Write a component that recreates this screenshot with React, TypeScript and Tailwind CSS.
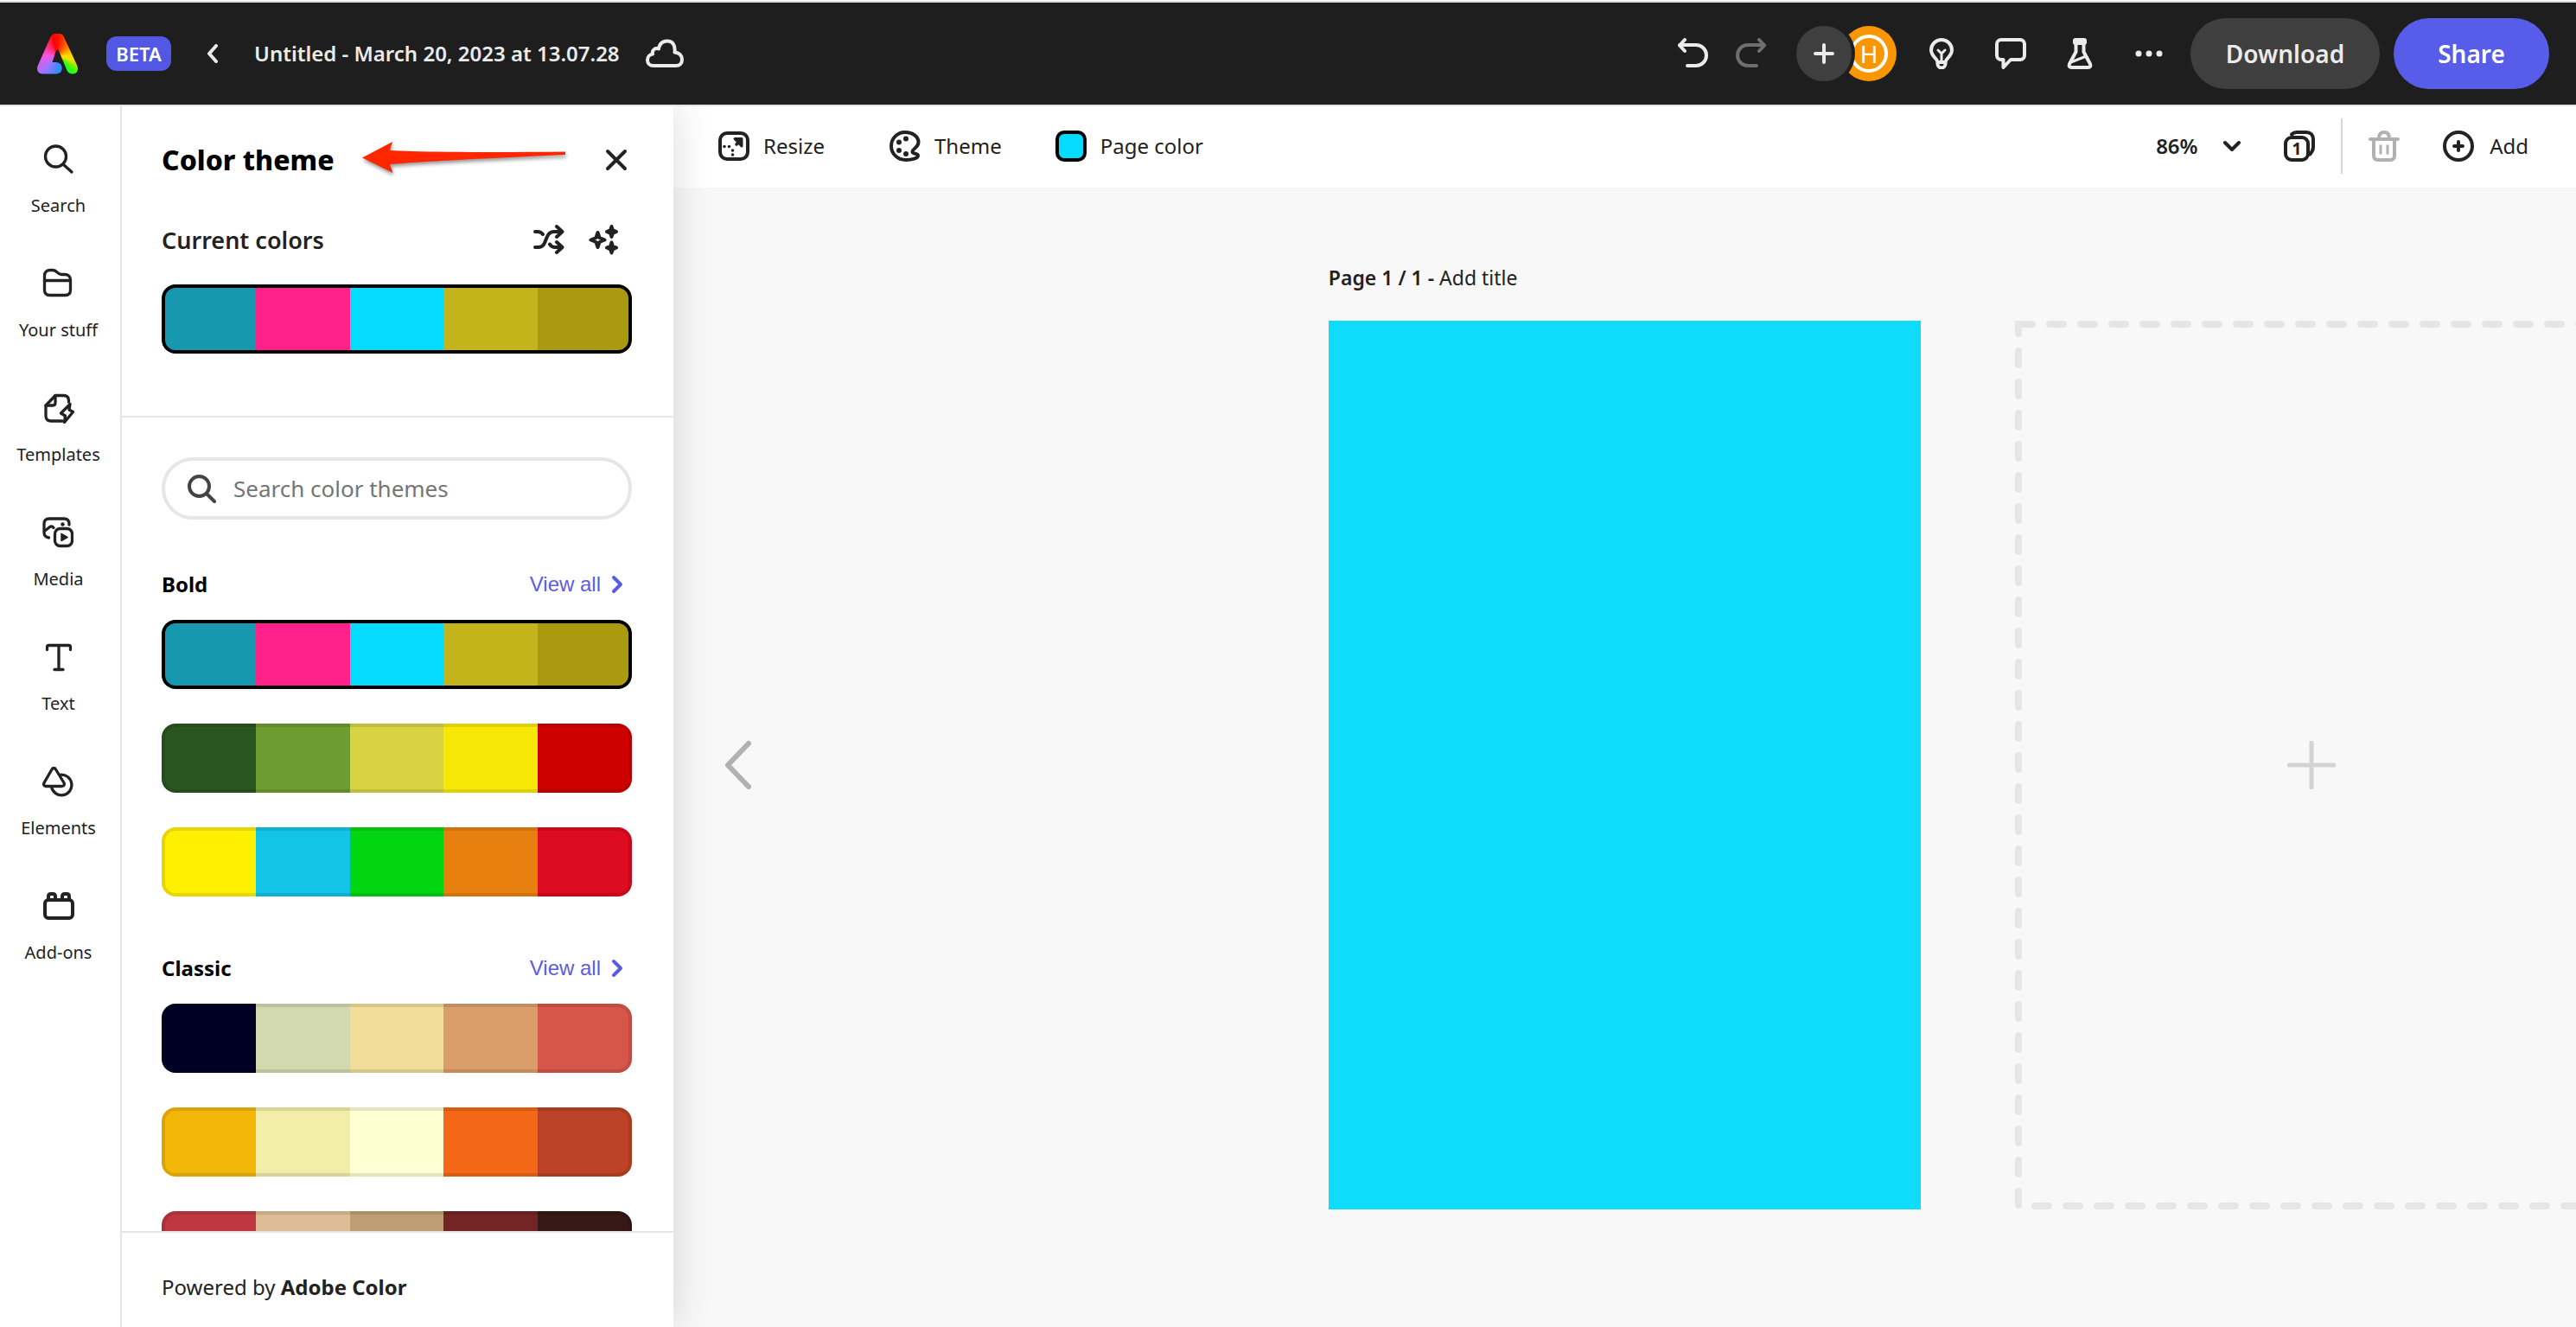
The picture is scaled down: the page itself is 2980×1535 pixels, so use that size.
import type { ReactNode } from "react";

type IconProps = { children: ReactNode; w?: number; h?: number; sw?: number; className?: string };

function Icon({ children, w = 36, h = 36, sw = 4, className = "" }: IconProps) {
  return (
    <svg
      width={w}
      height={h}
      viewBox={`0 0 ${w} ${h}`}
      fill="none"
      stroke="currentColor"
      strokeWidth={sw}
      strokeLinecap="round"
      strokeLinejoin="round"
      aria-hidden="true"
      className={`shrink-0 ${className}`}
    >
      {children}
    </svg>
  );
}

const navItems: { label: string; icon: ReactNode }[] = [
  {
    label: "Search",
    icon: (
      <Icon sw={3.3}>
        <circle cx="14.5" cy="15" r="12" />
        <path d="M23 24 L33 33" />
      </Icon>
    ),
  },
  {
    label: "Your stuff",
    icon: (
      <Icon sw={3.3}>
        <path d="M2.5 9 C2.5 5 5 2.5 9 2.5 H12.5 C17 2.5 17 7.5 22 7.5 H26 C30 7.5 32.5 10 32.5 13.5 V25.5 C32.5 29.5 30 31.5 26.5 31.5 H8.5 C4.5 31.5 2.5 29 2.5 25.5 Z M2.5 14.5 H32.5" />
      </Icon>
    ),
  },
  {
    label: "Templates",
    icon: (
      <Icon sw={3.3}>
        <path d="M22 33 H9 C5 33 3 31 3 27 V15 L14 3.5 H23.5 C27.5 3.5 29.5 5.5 29.5 9.5 V11" />
        <path d="M3 15 H11 C13 15 14 14 14 12 V3.5" />
        <path d="M31 13.5 L20.5 24 L25.5 27 L24.5 34.5 L34.5 22.5 L30 20 Z" />
      </Icon>
    ),
  },
  {
    label: "Media",
    icon: (
      <Icon sw={3.3}>
        <path d="M31 9 V8 C31 4 29 2 25 2 H8 C4 2 2 4 2 8 V18 C2 21.5 4 23.5 7.5 24" />
        <path d="M3 16 L8 12 C10 10.5 11.5 10.5 13 12.5" />
        <circle cx="23.5" cy="8.5" r="2.2" fill="currentColor" stroke="none" />
        <rect x="14.5" y="13.5" width="20" height="20" rx="6" />
        <path d="M22 19.5 L29 23.5 L22 27.5 Z" fill="currentColor" strokeWidth="1.5" />
      </Icon>
    ),
  },
  {
    label: "Text",
    icon: (
      <Icon sw={3.3}>
        <path d="M4.5 9.5 V7 C4.5 5.5 5 4.5 6.5 4.5 H29.5 C31 4.5 31.5 5.5 31.5 7 V9.5" />
        <path d="M18 5 V32.5 M13 32.5 H23" />
      </Icon>
    ),
  },
  {
    label: "Elements",
    icon: (
      <Icon sw={3.3}>
        <path d="M11 4 C12 2 14.5 2 15.5 4 L25 19.5 C26 21.5 25 23.5 22.5 23.5 H4 C2 23.5 1 21.5 2 19.5 Z" />
        <path d="M20.5 10.3 A11.8 11.8 0 1 1 10.5 24" />
      </Icon>
    ),
  },
  {
    label: "Add-ons",
    icon: (
      <Icon sw={4}>
        <rect x="2" y="11" width="32" height="21" rx="4" />
        <path d="M6 11 V7 C6 5 7 4 9 4 H11 C13 4 14 5 14 7 V11 M22 11 V7 C22 5 23 4 25 4 H27 C29 4 30 5 30 7 V11" />
      </Icon>
    ),
  },
];

const currentTheme = ["#1898af", "#ff2189", "#05daff", "#c4b41b", "#aa9a0f"];

const sections = [
  {
    name: "Bold",
    themes: [
      currentTheme,
      ["#29561f", "#6f9c30", "#d7d343", "#f8e805", "#cf0000"],
      ["#ffef00", "#13c4e7", "#02d611", "#e8800f", "#dd0c20"],
    ],
  },
  {
    name: "Classic",
    themes: [
      ["#000024", "#d2d9ae", "#f1dc9a", "#d99e6a", "#d7564a"],
      ["#f2b708", "#f2eda8", "#feffd3", "#f36716", "#bc4328"],
      ["#be3640", "#debd96", "#bf9e76", "#732425", "#361817"],
    ],
  },
];

function Swatches({ colors, selected = false, label }: { colors: string[]; selected?: boolean; label: string }) {
  return (
    <button aria-label={label} className="relative flex h-20 w-full shrink-0 overflow-hidden rounded-2xl">
      {colors.map((c) => (
        <span key={c} className="h-full flex-1" style={{ backgroundColor: c }} />
      ))}
      <span
        className={`absolute inset-0 rounded-2xl border-4 ${selected ? "border-black" : "border-black/10"}`}
      />
    </button>
  );
}

function Header() {
  return (
    <header className="flex h-[120px] shrink-0 items-center justify-between border-b-2 border-[#e4e4e4] bg-[#1e1e1e] pl-[43px] pr-[31px] text-[#ebebeb]">
      <div className="flex items-center">
        <a
          href="#home"
          aria-label="Home"
          className="block h-[47px] w-[47px] bg-[conic-gradient(from_0deg_at_24px_26px,#ff1000_0deg,#ff7a00_45deg,#ffd800_85deg,#ffe000_105deg,#80f000_122deg,#20ff20_136deg,#20ff20_150deg,#2e8fff_155deg,#3d8bff_185deg,#a273ff_225deg,#fb52e0_275deg,#ff2a60_325deg,#ff0000_345deg,#ff1000_360deg)] [clip-path:path('M14.5_6.5_C16_2_19_0_23.5_0_C28_0_30.5_2_32_6.5_L46.3_37.5_C48.5_43_45.5_47_41.5_47_C38_47_35.5_45.5_34.3_42.5_L24.8_20_C24_18.5_22.5_18.5_21.9_20_L17.5_33.5_C19_33.4_20_33.4_21.5_33.4_C26_33.4_28.7_36.5_28.7_40.3_C28.7_44.5_26_47_21.5_47_H6.5_C1.5_47_-1_43_0.5_38_Z')]"
        />
        <span className="ml-[33px] flex h-10 w-[75px] items-center justify-center rounded-xl bg-[#5258e4] text-[22px] font-semibold text-white">
          BETA
        </span>
        <button aria-label="Back" className="ml-[41px]">
          <Icon w={14} h={22}>
            <path d="M11 2 L3 11 L11 20" />
          </Icon>
        </button>
        <h1 className="ml-[41px] text-2xl font-semibold">Untitled - March 20, 2023 at 13.07.28</h1>
        <Icon w={44} h={34} className="ml-[30px]">
          <path d="M9 31 C4.500 31 2 28 2 24.500 C2 21 4.500 18 8 17.500 C7 12.500 11 10 15 11.500 C16 5.500 20 2.500 25 2.500 C31 2.500 34.500 7 33.500 15.500 C39 16 42 19.500 42 24 C42 28.500 39 31 35 31 Z" />
        </Icon>
      </div>
      <div className="flex items-center">
        <button aria-label="Undo">
          <Icon>
            <path d="M3 8 H22 A12 12 0 0 1 22 32 H12 M9 2 L3 8.500 L9 15" />
          </Icon>
        </button>
        <button aria-label="Redo" className="ml-8 text-[#6e6e6e]">
          <Icon>
            <path d="M33 8 H14 A12 12 0 0 0 14 32 H24 M27 2 L33 8.500 L27 15" />
          </Icon>
        </button>
        <div className="ml-[34px] flex items-center">
          <button
            aria-label="Invite"
            className="relative z-10 -m-1 flex h-[72px] w-[72px] items-center justify-center rounded-full border-4 border-[#1e1e1e] bg-[#3f3f3f]"
          >
            <Icon w={28} h={28}>
              <path d="M14 4 V24 M4 14 H24" />
            </Icon>
          </button>
          <button
            aria-label="Account H"
            className="-ml-3 flex h-16 w-16 items-center justify-center rounded-full bg-[#fa9600]"
          >
            <span className="flex h-11 w-11 items-center justify-center rounded-full border-4 border-white text-[28px] leading-none text-white">
              H
            </span>
          </button>
        </div>
        <div className="ml-[34px] flex items-center gap-11">
          <button aria-label="Tips">
            <Icon>
              <path d="M13.500 28 C13.500 24 6 21 6 14 A12 12 0 0 1 30 14 C30 21 22.500 24 22.500 28" />
              <path d="M13.500 28 H22.500 V30 A4.500 4.500 0 0 1 13.500 30 Z" />
              <path d="M18 27 V18 M14 14 L18 18 L22 14" strokeWidth="3" />
            </Icon>
          </button>
          <button aria-label="Comments">
            <Icon>
              <path d="M7 2 H29 A5 5 0 0 1 34 7 V20 A5 5 0 0 1 29 25 H18 L9.500 34 V25 H7 A5 5 0 0 1 2 20 V7 A5 5 0 0 1 7 2 Z" />
            </Icon>
          </button>
          <button aria-label="Beta features">
            <Icon>
              <rect x="10" y="0" width="16" height="8" rx="3" fill="currentColor" stroke="none" />
              <path d="M13.500 8 V16 L6 30 C5 32.500 6 34 8.500 34 H27.500 C30 34 31 32.500 30 30 L22.500 16 V8" />
              <path d="M9 27.500 L24 21.500" strokeWidth="3" />
            </Icon>
          </button>
          <button aria-label="More">
            <Icon>
              <g fill="currentColor" stroke="none">
                <circle cx="6" cy="18" r="3.500" />
                <circle cx="18" cy="18" r="3.500" />
                <circle cx="30" cy="18" r="3.500" />
              </g>
            </Icon>
          </button>
        </div>
        <button className="ml-[30px] h-[82px] w-[219px] rounded-full bg-[#3f3f3f] text-[28px] font-semibold">
          Download
        </button>
        <button className="ml-4 h-[82px] w-[180px] rounded-full bg-[#585de9] text-[28px] font-semibold text-white">
          Share
        </button>
      </div>
    </header>
  );
}

function ThemePanel() {
  return (
    <section className="relative z-10 flex w-[638px] shrink-0 flex-col bg-white shadow-[0_0_44px_rgba(0,0,0,0.15)]">
      <div className="border-b-2 border-[#e6e6e6] pb-[72px] pl-[46px] pr-12 pt-[42px]">
        <div className="flex h-10 items-center">
          <h2 className="text-[32px] font-extrabold leading-10 text-black">Color theme</h2>
          <svg
            width="236"
            height="40"
            viewBox="0 0 236 40"
            aria-hidden="true"
            className="-mt-1 ml-8 shrink-0 overflow-visible drop-shadow-[1px_3px_2px_rgba(0,0,0,0.4)]"
          >
            <path
              d="M0 19.500 L35 1 L32 11 C60 13 150 13.500 235 12.500 V16 C150 20 80 23 32 27 L35.500 37 Z"
              fill="#ff2600"
            />
          </svg>
          <button aria-label="Close" className="ml-auto flex h-9 w-9 items-center justify-center">
            <Icon w={26} h={26} sw={4}>
              <path d="M3 3 L23 23 M23 3 L3 23" />
            </Icon>
          </button>
        </div>
        <div className="mt-[55px] flex h-9 items-center justify-between pr-[14px]">
          <h3 className="text-[27px] font-semibold leading-9">Current colors</h3>
          <div className="flex gap-7">
            <button aria-label="Shuffle colors">
              <Icon>
                <path d="M2 8 H5 C8 8 9.500 9 11 11" />
                <path d="M2 26 H6 C17 26 12 8 24 8 H33 M27 2 L33.500 8 L27 14" />
                <path d="M19 22.500 C20.500 25 22.500 26 25 26 H33 M27 20 L33.500 26 L27 32" />
              </Icon>
            </button>
            <button aria-label="Generate colors">
              <Icon sw={4}>
                <path d="M10.500 9 L12.500 15 L18.500 17.500 L12.500 20 L10.500 26 L8.500 20 L2.500 17.500 L8.500 15 Z" />
                <path
                  fill="currentColor"
                  d="M26.500 2 L27.800 6.200 L32 8 L27.800 9.800 L26.500 14 L25.200 9.800 L21 8 L25.200 6.200 Z M26.500 20.500 L27.800 24.700 L32 26.500 L27.800 28.300 L26.500 32.500 L25.200 28.300 L21 26.500 L25.200 24.700 Z"
                />
              </Icon>
            </button>
          </div>
        </div>
        <div className="mt-[33px]">
          <Swatches colors={currentTheme} selected label="Current color theme" />
        </div>
      </div>

      <div className="min-h-0 flex-1 basis-0 overflow-hidden pl-[46px] pr-12 pt-[46px]">
        <label className="flex h-[72px] items-center gap-5 rounded-full border-4 border-[#e6e6e6] pl-[26px] pr-6">
          <Icon w={33} h={33} className="text-[#444444]">
            <circle cx="13.500" cy="13.500" r="11.500" />
            <path d="M22 22 L31 31" />
          </Icon>
          <input
            type="search"
            aria-label="Search color themes"
            placeholder="Search color themes"
            className="min-w-0 flex-1 bg-transparent text-[26px] outline-none placeholder:text-[#757575]"
          />
        </label>
        {sections.map((s, si) => (
          <div key={s.name} className={si === 0 ? "mt-[59px]" : "mt-[67px]"}>
            <div className="flex h-8 items-center justify-between pr-[10px]">
              <h3 className="text-2xl font-bold text-black">{s.name}</h3>
              <a
                href={`#${s.name.toLowerCase()}`}
                className="flex items-center gap-3 font-['Liberation_Sans',sans-serif] text-2xl text-[#5c5ce0]"
              >
                View all
                <Icon w={14} h={22}>
                  <path d="M3 3 L11 11 L3 19" />
                </Icon>
              </a>
            </div>
            <div className="mt-[25px] flex flex-col gap-10">
              {s.themes.map((t, i) => (
                <Swatches key={i} colors={t} selected={t === currentTheme} label={`${s.name} theme ${i + 1}`} />
              ))}
            </div>
          </div>
        ))}
      </div>

      <footer className="h-[111px] shrink-0 border-t-2 border-[#e6e6e6] pl-[46px] pt-[47px] text-2xl">
        Powered by{" "}
        <a href="#adobe-color" className="font-bold">
          Adobe Color
        </a>
      </footer>
    </section>
  );
}

function Toolbar() {
  return (
    <div className="flex h-[94px] shrink-0 items-center justify-between bg-white pb-[2px] pl-[52px] pr-[55px] text-2xl leading-9">
      <div className="flex items-center gap-[62px]">
        <button className="flex min-w-[136px] items-center gap-4">
          <Icon w={36} h={36}>
            <rect x="2" y="3" width="32" height="30" rx="8" />
            <path d="M21 16 L25 12" strokeWidth="3.500" />
            <path d="M19 9.500 H27 V18 Z" fill="currentColor" strokeWidth="3" />
            <g fill="currentColor" stroke="none">
              <circle cx="7" cy="18.500" r="1.800" />
              <circle cx="12.500" cy="18.500" r="1.800" />
              <circle cx="16.500" cy="23" r="1.800" />
              <circle cx="16.500" cy="28" r="1.800" />
            </g>
          </Icon>
          Resize
        </button>
        <button className="flex items-center gap-4">
          <Icon>
            <path d="M18 2 C27 2 33.500 7 33.500 13.500 C33.500 20 26.500 20.500 26.500 24.500 C26.500 27.500 33 26 33 29 C33 32 26 34 19 34 C9.500 34 2 27 2 18 S9 2 18 2 Z" />
            <g fill="currentColor" stroke="none">
              <circle cx="19" cy="9.500" r="3" />
              <circle cx="11" cy="13.500" r="3" />
              <circle cx="11" cy="23" r="3" />
              <circle cx="19" cy="27" r="3" />
            </g>
          </Icon>
          Theme
        </button>
        <button className="flex items-center gap-4">
          <span className="h-9 w-9 rounded-[10px] border-4 border-black bg-[#05dbfd]" />
          Page color
        </button>
      </div>
      <div className="flex items-center">
        <div className="relative flex items-center">
          <select aria-label="Zoom" defaultValue="86" className="w-[98px] appearance-none bg-transparent font-semibold">
            <option value="50">50%</option>
            <option value="86">86%</option>
            <option value="100">100%</option>
          </select>
          <span className="pointer-events-none absolute right-0">
            <Icon w={20} h={14}>
              <path d="M2 3 L10 11 L18 3" />
            </Icon>
          </span>
        </div>
        <button aria-label="Pages" className="ml-[50px]">
          <Icon>
            <rect x="2" y="8" width="26" height="26" rx="7" />
            <path d="M9 4.500 C10.500 3 12 2 15 2 H26 C31 2 34 5 34 10 V19 C34 23 32.500 25 30 27.500" />
            <text
              x="15"
              y="28"
              textAnchor="middle"
              fontSize="19"
              fontWeight="700"
              fill="currentColor"
              stroke="none"
            >
              1
            </text>
          </Icon>
        </button>
        <span className="ml-[30px] h-16 w-[2px] bg-[#d5d5d5]" />
        <button aria-label="Delete" className="ml-[30px] text-[#b1b1b1]">
          <Icon>
            <path d="M2 10 H34 M12 9 C12 4.500 14 2 18 2 S24 4.500 24 9" />
            <path d="M6 11 V29 C6 32.500 7.500 34 11 34 H25 C28.500 34 30 32.500 30 29 V11" />
            <path d="M14 18 V26 M22 18 V26" strokeLinecap="square" strokeWidth="3" />
          </Icon>
        </button>
        <button className="ml-[50px] flex items-center gap-[18px]">
          <Icon>
            <circle cx="18" cy="18" r="16" />
            <path d="M18 13 V23 M13 18 H23" />
          </Icon>
          Add
        </button>
      </div>
    </div>
  );
}

function Canvas() {
  return (
    <div className="grid min-h-0 flex-1 grid-cols-[minmax(0,1fr)_auto_minmax(0,1fr)] grid-rows-[154px_minmax(0,1fr)] overflow-hidden pb-[136px]">
      <p className="col-start-2 row-start-1 pt-[88px] text-[23px] leading-8">
        <span className="font-semibold">Page 1 / 1 -</span> Add title
      </p>
      <button
        aria-label="Previous page"
        className="col-start-1 row-start-2 ml-[58px] self-center justify-self-start text-[#b1b1b1]"
      >
        <Icon w={34} h={58} sw={6}>
          <path d="M29 4 L5 29 L29 54" />
        </Icon>
      </button>
      <div className="col-start-2 row-start-2 aspect-[2/3] h-full bg-[#0fdbfc]" />
      <button
        aria-label="Add page"
        className="relative col-start-3 row-start-2 ml-[109px] flex aspect-[2/3] h-full items-center justify-center text-[#d3d3d3]"
      >
        <svg
          className="absolute inset-0 h-full w-full text-[#e6e6e6]"
          fill="none"
          stroke="currentColor"
          strokeWidth="8"
          strokeLinecap="round"
          strokeDasharray="16 20"
          aria-hidden="true"
        >
          <line x1="4" y1="0" x2="4" y2="100%" strokeDashoffset="1" />
          <line x1="4" y1="4" x2="100%" y2="4" />
          <svg y="100%" overflow="visible">
            <line x1="23" y1="-4" x2="100%" y2="-4" />
          </svg>
        </svg>
        <Icon w={56} h={56} sw={5}>
          <path d="M28 2 V54 M2 28 H54" />
        </Icon>
      </button>
    </div>
  );
}

export default function App() {
  return (
    <div className="flex h-screen min-h-[900px] flex-col overflow-hidden bg-white pt-px font-['Noto_Sans','Open_Sans',sans-serif] text-[#222222]">
      <div className="h-[2px] shrink-0 bg-[#dcdcdc]" />
      <Header />
      <div className="flex min-h-0 flex-1 overflow-hidden">
        <nav className="relative z-20 flex w-[141px] shrink-0 flex-col items-center gap-[58px] border-r-2 border-[#e6e6e6] bg-white pr-1 pt-[43px]">
          {navItems.map((n) => (
            <button key={n.label} className="flex flex-col items-center gap-[22px] text-xl leading-7">
              {n.icon}
              {n.label}
            </button>
          ))}
        </nav>
        <ThemePanel />
        <main className="flex min-w-0 flex-1 flex-col bg-[#f8f8f8]">
          <Toolbar />
          <Canvas />
        </main>
      </div>
    </div>
  );
}
